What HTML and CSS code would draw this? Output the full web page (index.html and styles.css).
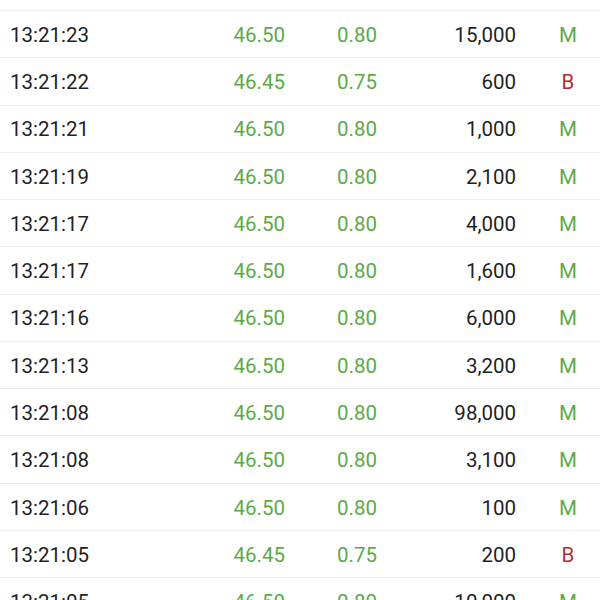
FILE: index.html
```html
<!DOCTYPE html>
<html>
<head>
<meta charset="utf-8">
<link rel="stylesheet" href="styles.css">
</head>
<body>
<div class="list">
  <div class="row"><span class="time">13:21:23</span><span class="price up">46.50</span><span class="chg up">0.80</span><span class="vol">15,000</span><span class="side up">M</span></div>
  <div class="row"><span class="time">13:21:22</span><span class="price up">46.45</span><span class="chg up">0.75</span><span class="vol">600</span><span class="side down">B</span></div>
  <div class="row"><span class="time">13:21:21</span><span class="price up">46.50</span><span class="chg up">0.80</span><span class="vol">1,000</span><span class="side up">M</span></div>
  <div class="row"><span class="time">13:21:19</span><span class="price up">46.50</span><span class="chg up">0.80</span><span class="vol">2,100</span><span class="side up">M</span></div>
  <div class="row"><span class="time">13:21:17</span><span class="price up">46.50</span><span class="chg up">0.80</span><span class="vol">4,000</span><span class="side up">M</span></div>
  <div class="row"><span class="time">13:21:17</span><span class="price up">46.50</span><span class="chg up">0.80</span><span class="vol">1,600</span><span class="side up">M</span></div>
  <div class="row"><span class="time">13:21:16</span><span class="price up">46.50</span><span class="chg up">0.80</span><span class="vol">6,000</span><span class="side up">M</span></div>
  <div class="row"><span class="time">13:21:13</span><span class="price up">46.50</span><span class="chg up">0.80</span><span class="vol">3,200</span><span class="side up">M</span></div>
  <div class="row"><span class="time">13:21:08</span><span class="price up">46.50</span><span class="chg up">0.80</span><span class="vol">98,000</span><span class="side up">M</span></div>
  <div class="row"><span class="time">13:21:08</span><span class="price up">46.50</span><span class="chg up">0.80</span><span class="vol">3,100</span><span class="side up">M</span></div>
  <div class="row"><span class="time">13:21:06</span><span class="price up">46.50</span><span class="chg up">0.80</span><span class="vol">100</span><span class="side up">M</span></div>
  <div class="row"><span class="time">13:21:05</span><span class="price up">46.45</span><span class="chg up">0.75</span><span class="vol">200</span><span class="side down">B</span></div>
  <div class="row"><span class="time">13:21:05</span><span class="price up">46.50</span><span class="chg up">0.80</span><span class="vol">10,000</span><span class="side up">M</span></div>
</div>
</body>
</html>
```
FILE: styles.css
```css
html, body {
  margin: 0;
  padding: 0;
  background: #fff;
  overflow: hidden;
}
body {
  font-family: Roboto, "Noto Sans", sans-serif;
  font-size: 20.5px;
  color: #1f1f1f;
}
.list {
  padding-top: 10px;
}
.row {
  display: grid;
  grid-template-columns: 150px 125px 100px 131px 1fr;
  align-items: center;
  height: 47.27px;
  box-sizing: border-box;
  border-top: 1px solid #efefef;
  padding-left: 10px;
  padding-top: 2px;
}
.row > span {
  line-height: 1;
}
.price { text-align: right; }
.chg { padding-left: 52px; }
.vol { text-align: right; }
.side { text-align: center; padding-left: 20px; }
.up { color: #5aab45; }
.down { color: #b22f2f; }
```
